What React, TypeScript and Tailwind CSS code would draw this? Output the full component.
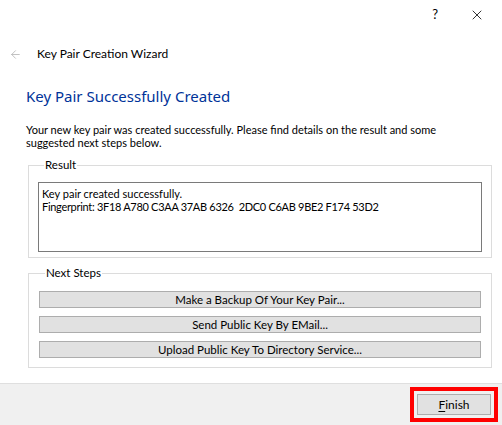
import { ArrowLeft, X } from 'lucide-react';

const font = { fontFamily: 'Lato, "Noto Sans", "Liberation Sans", sans-serif' };

function StepButton({ label }: { label: string }) {
  return (
    <button className="h-[17px] w-full border border-[#adadad] bg-[#e1e1e1] text-[11.5px] leading-[15px] text-black">
      {label}
    </button>
  );
}

export default function App() {
  return (
    <div className="flex h-[425px] w-[502px] flex-col bg-white text-[11px] text-black" style={font}>
      {/* caption buttons */}
      <div className="flex h-[30px] items-center justify-end gap-[31px] pr-[17px]">
        <span className="text-[13px]">?</span>
        <X size={16} strokeWidth={1.2} />
      </div>

      {/* wizard header */}
      <div className="flex h-[48px] items-center gap-[15px] pl-[9px]">
        <ArrowLeft size={13} strokeWidth={1.5} className="text-[#b4b4b4]" />
        <span className="text-[12px]">Key Pair Creation Wizard</span>
      </div>

      <div className="flex flex-1 flex-col pl-[26px] pr-[10px]">
        <h1 className="mt-[8px] text-[15px] leading-[20px] text-[#003399]" style={{ fontFamily: '"Noto Sans", sans-serif' }}>
          Key Pair Successfully Created
        </h1>
        <p className="mt-[17px] leading-[13px]">
          Your new key pair was created successfully. Please find details on the result and some
          <br />
          suggested next steps below.
        </p>

        <fieldset className="mt-[9px] ml-[2px] h-[100px] border border-[#dcdcdc] px-[9px] pb-[8px]">
          <legend className="ml-[6px] px-[1px] text-[11.5px] leading-[14px]">Result</legend>
          <div className="mt-[10px] h-[70px] border border-[#7a7a7a] px-[3px] py-[4px] leading-[13px]">
            <div>Key pair created successfully.</div>
            <div className="tracking-[-0.3px]">Fingerprint: 3F18 A780 C3AA 37AB 6326&nbsp; 2DC0 C6AB 9BE2 F174 53D2</div>
          </div>
        </fieldset>

        <fieldset className="mt-[8px] ml-[2px] h-[102px] border border-[#dcdcdc] px-[10px]">
          <legend className="ml-[6px] px-[1px] text-[11.5px] leading-[14px]">Next Steps</legend>
          <div className="mt-[11px] flex flex-col gap-[8px]">
            <StepButton label="Make a Backup Of Your Key Pair..." />
            <StepButton label="Send Public Key By EMail..." />
            <StepButton label="Upload Public Key To Directory Service..." />
          </div>
        </fieldset>
      </div>

      {/* footer */}
      <div className="flex h-[42px] items-center justify-end border-t border-[#dfdfdf] bg-[#f0f0f0] pr-[4px]">
        <div className="border-[4px] border-[#ff0000] p-[3px]">
          <button className="h-[21px] w-[74px] border border-[#adadad] bg-[#e1e1e1] text-[12px] leading-[19px]">
            <span className="underline underline-offset-2">F</span>inish
          </button>
        </div>
      </div>
    </div>
  );
}
